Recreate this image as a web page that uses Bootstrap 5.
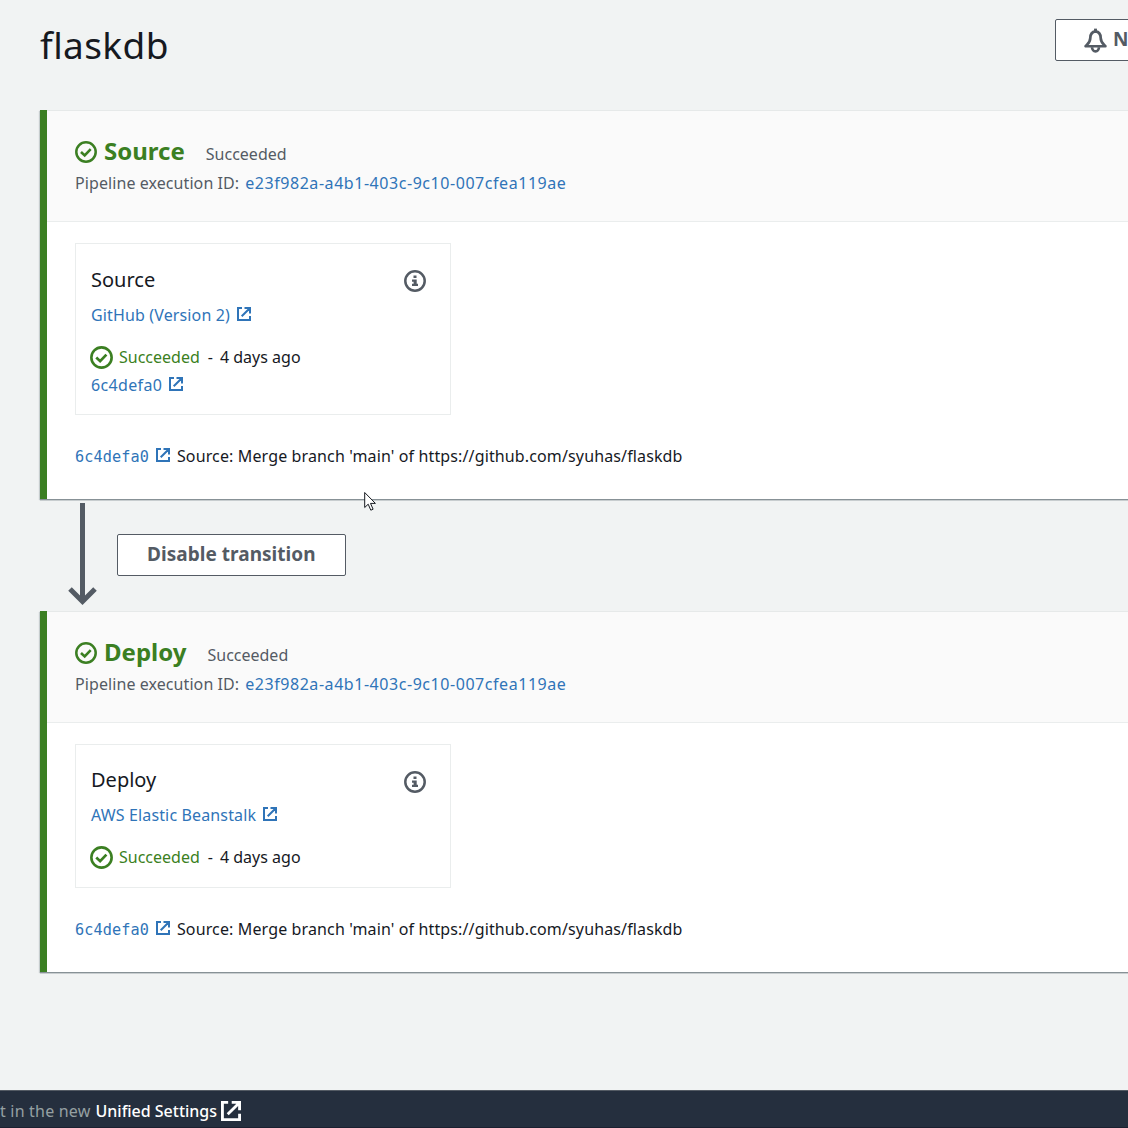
<!DOCTYPE html>
<html lang="en">
<head>
<meta charset="utf-8">
<meta name="viewport" content="width=device-width, initial-scale=1">
<title>flaskdb</title>
<link href="https://cdn.jsdelivr.net/npm/bootstrap@5.3.0/dist/css/bootstrap.min.css" rel="stylesheet">
<style>
:root { --ink: #16191f; --slate: #545b64; --ok: #3b7f22; --link: #2f74b8; }
html { overflow: hidden; }
body { background: #f1f3f3; color: var(--ink); font: 16px/28px "Noto Sans", sans-serif; letter-spacing: .14px; height: 1128px; overflow: hidden; }
svg { flex: none; display: block; }
a { color: var(--link); text-decoration: none; }
.pipeline-head { height: 110px; padding: 19px 0 0 40px; overflow: hidden; }
.pipeline-name { font-size: 37px; line-height: 52px; letter-spacing: .4px; margin: 0; font-weight: 400; }
.btn-aws { height: 42px; border: 1px solid var(--slate); border-radius: 2px; background: #fff; color: var(--slate); font-size: 19px; line-height: 38px; font-weight: 700; letter-spacing: .04px; padding: 0 29px 2px; white-space: nowrap; }
.btn-notify { width: 140px; margin-right: -67px; padding-left: 27px; gap: 5px; }
.bell { margin-top: 8px; }
.stage { margin-left: 40px; background: #fff; border-left: 7px solid var(--ok); box-shadow: 0 1px 0 #879196, 0 2px 0 #c8cdcf, -1px 1px 1px rgba(0,28,36,.18); }
.stage-head { height: 112px; background: #fafafa; border-top: 1px solid #e6e9e9; border-bottom: 1px solid #eaeded; padding: 25px 0 0 28px; }
.stage-title { font-size: 24px; line-height: 30px; font-weight: 700; letter-spacing: 0; color: var(--ok); margin: 0 0 0 7px; }
.stage-state { margin-left: 21px; line-height: 30px; padding-top: 3px; height: 30px; letter-spacing: 0; }
.stage-check { margin-top: 1px; }
.exec-row { line-height: 24px; margin: 5px 0 0; gap: 6px; letter-spacing: .08px; }
.exec-id { letter-spacing: .55px; }
.stage-body { padding: 21px 0 29px 28px; }
.action { width: 376px; height: 172px; border: 1px solid #eaeded; padding: 21px 24px 0 15px; }
.action-short { height: 144px; padding-top: 20px; }
.action-title { font-size: 20px; line-height: 30px; font-weight: 400; letter-spacing: 0; margin: 0; }
.action-info { margin-top: 5px; }
.action-short .action-info { margin-top: 6px; }
.action-provider { margin-top: 6px; }
.action-state { margin-top: 14px; letter-spacing: 0; }
.action-check { margin: 1px 6px 0 -1px; }
.action-dash { padding: 0 7px 0 8px; }
.action-rev { letter-spacing: .35px; }
.ext-mark { width: 14px; height: 14px; margin: -2px 7px 0; color: var(--link); }
.commit-msg { margin-top: 27px; }
.commit-text { letter-spacing: .13px; }
.commit-sha { font: 15.2px/28px "DejaVu Sans Mono", monospace; letter-spacing: .1px; padding-top: 1px; height: 28px; }
.text-ok { color: var(--ok); }
.text-slate { color: var(--slate); }
.transition-row { height: 112px; margin-left: 40px; padding: 4px 0 0 28px; }
.transition-row .btn-aws { margin: 31px 0 0 20px; }
.pointer { position: absolute; left: 364px; top: 491px; z-index: 5; }
.site-foot { margin-top: 118px; height: 38px; background: #252f3e; border-top: 1px solid #545b64; border-bottom: 1px solid #1b2030; color: #95a0a2; padding-top: 4px; overflow: hidden; letter-spacing: .2px; }
.site-foot a { color: #fff; font-weight: 500; letter-spacing: -.02px; margin-left: 5px; }
.foot-mark { color: #fff; margin-left: 4px; }
</style>
</head>
<body>
<svg width="0" height="0" class="position-absolute" aria-hidden="true">
  <symbol id="ok" viewBox="0 0 22 22"><circle cx="11" cy="11" r="9.700" fill="none" stroke="currentColor" stroke-width="2.500"/><path d="M6 11l3.700 3.500 6-6.300" fill="none" stroke="currentColor" stroke-width="2.600"/></symbol>
  <symbol id="info" viewBox="0 0 22 22"><circle cx="11" cy="11" r="9.700" fill="none" stroke="currentColor" stroke-width="2.500"/><path d="M9.500 5.500h3V8h-3zM8 9.400h4.700v4.300H14V16H8v-2.300h1.600v-2H8z" fill="currentColor"/></symbol>
  <symbol id="ext" viewBox="0 0 14 14"><path d="M5 1H1v12h12V9M7.500 1H13v5.500M12.500 1.500L4.700 9.300" fill="none" stroke="currentColor" stroke-width="2"/></symbol>
</svg>

<header class="pipeline-head d-flex justify-content-between align-items-start">
  <h1 class="pipeline-name">flaskdb</h1>
  <button class="btn btn-aws btn-notify d-flex">
    <svg class="bell" width="25" height="25" viewBox="0 0 24 24"><path d="M12 3.200c-3.800.6-5 3-5 6.300 0 4-2.300 5.500-4.500 8h19c-2.200-2.500-4.500-4-4.500-8 0-3.300-1.200-5.700-5-6.300z" fill="none" stroke="currentColor" stroke-width="2.600" stroke-linejoin="round"/><path d="M12 .6V4" stroke="currentColor" stroke-width="2.800"/><path d="M8.700 18.500a3.300 4 0 0 0 6.600 0" fill="none" stroke="currentColor" stroke-width="2.600"/></svg>
    <span>Notify</span>
  </button>
</header>

<main>
  <section class="stage">
    <div class="stage-head">
      <div class="d-flex align-items-center">
        <svg width="22" height="22" class="text-ok stage-check"><use href="#ok"/></svg>
        <h2 class="stage-title">Source</h2>
        <span class="stage-state text-slate">Succeeded</span>
      </div>
      <div class="exec-row d-flex text-slate"><span>Pipeline execution ID:</span><a class="exec-id" href="#">e23f982a-a4b1-403c-9c10-007cfea119ae</a></div>
    </div>
    <div class="stage-body">
      <div class="action">
        <div class="d-flex justify-content-between align-items-start">
          <h3 class="action-title">Source</h3>
          <svg width="22" height="22" class="text-slate action-info"><use href="#info"/></svg>
        </div>
        <div class="action-provider d-flex align-items-center"><a href="#">GitHub (Version 2)</a><svg class="ext-mark"><use href="#ext"/></svg></div>
        <div class="action-state d-flex align-items-center"><svg width="23" height="23" class="text-ok action-check"><use href="#ok"/></svg><span class="text-ok">Succeeded</span><span class="action-dash">-</span><span>4 days ago</span></div>
        <div class="d-flex align-items-center"><a class="action-rev" href="#">6c4defa0</a><svg class="ext-mark"><use href="#ext"/></svg></div>
      </div>
      <div class="commit-msg d-flex align-items-center"><a class="commit-sha" href="#">6c4defa0</a><svg class="ext-mark"><use href="#ext"/></svg><span class="commit-text">Source: Merge branch 'main' of https://github.com/syuhas/flaskdb</span></div>
    </div>
  </section>

  <div class="transition-row d-flex align-items-start">
    <svg width="29" height="103" viewBox="0 0 29 103" class="text-slate"><path d="M14.500 0v99M2 86l12.500 12.500L27 86" fill="none" stroke="currentColor" stroke-width="5"/></svg>
    <button class="btn btn-aws">Disable transition</button>
  </div>

  <section class="stage">
    <div class="stage-head">
      <div class="d-flex align-items-center">
        <svg width="22" height="22" class="text-ok stage-check"><use href="#ok"/></svg>
        <h2 class="stage-title">Deploy</h2>
        <span class="stage-state text-slate">Succeeded</span>
      </div>
      <div class="exec-row d-flex text-slate"><span>Pipeline execution ID:</span><a class="exec-id" href="#">e23f982a-a4b1-403c-9c10-007cfea119ae</a></div>
    </div>
    <div class="stage-body">
      <div class="action action-short">
        <div class="d-flex justify-content-between align-items-start">
          <h3 class="action-title">Deploy</h3>
          <svg width="22" height="22" class="text-slate action-info"><use href="#info"/></svg>
        </div>
        <div class="action-provider d-flex align-items-center"><a href="#">AWS Elastic Beanstalk</a><svg class="ext-mark"><use href="#ext"/></svg></div>
        <div class="action-state d-flex align-items-center"><svg width="23" height="23" class="text-ok action-check"><use href="#ok"/></svg><span class="text-ok">Succeeded</span><span class="action-dash">-</span><span>4 days ago</span></div>
      </div>
      <div class="commit-msg d-flex align-items-center"><a class="commit-sha" href="#">6c4defa0</a><svg class="ext-mark"><use href="#ext"/></svg><span class="commit-text">Source: Merge branch 'main' of https://github.com/syuhas/flaskdb</span></div>
    </div>
  </section>
</main>

<footer class="site-foot d-flex align-items-center">
  <span>t in the new</span><a href="#">Unified Settings</a>
  <svg class="foot-mark" width="20" height="20"><use href="#ext"/></svg>
</footer>

<svg class="pointer" width="13" height="21" viewBox="0 0 13 21"><path d="M.7 1.500v15l3.500-3.300 2.600 6 2.300-1-2.600-5.800h4.900z" fill="#fff" stroke="#16191f" stroke-width="1"/></svg>
</body>
</html>
